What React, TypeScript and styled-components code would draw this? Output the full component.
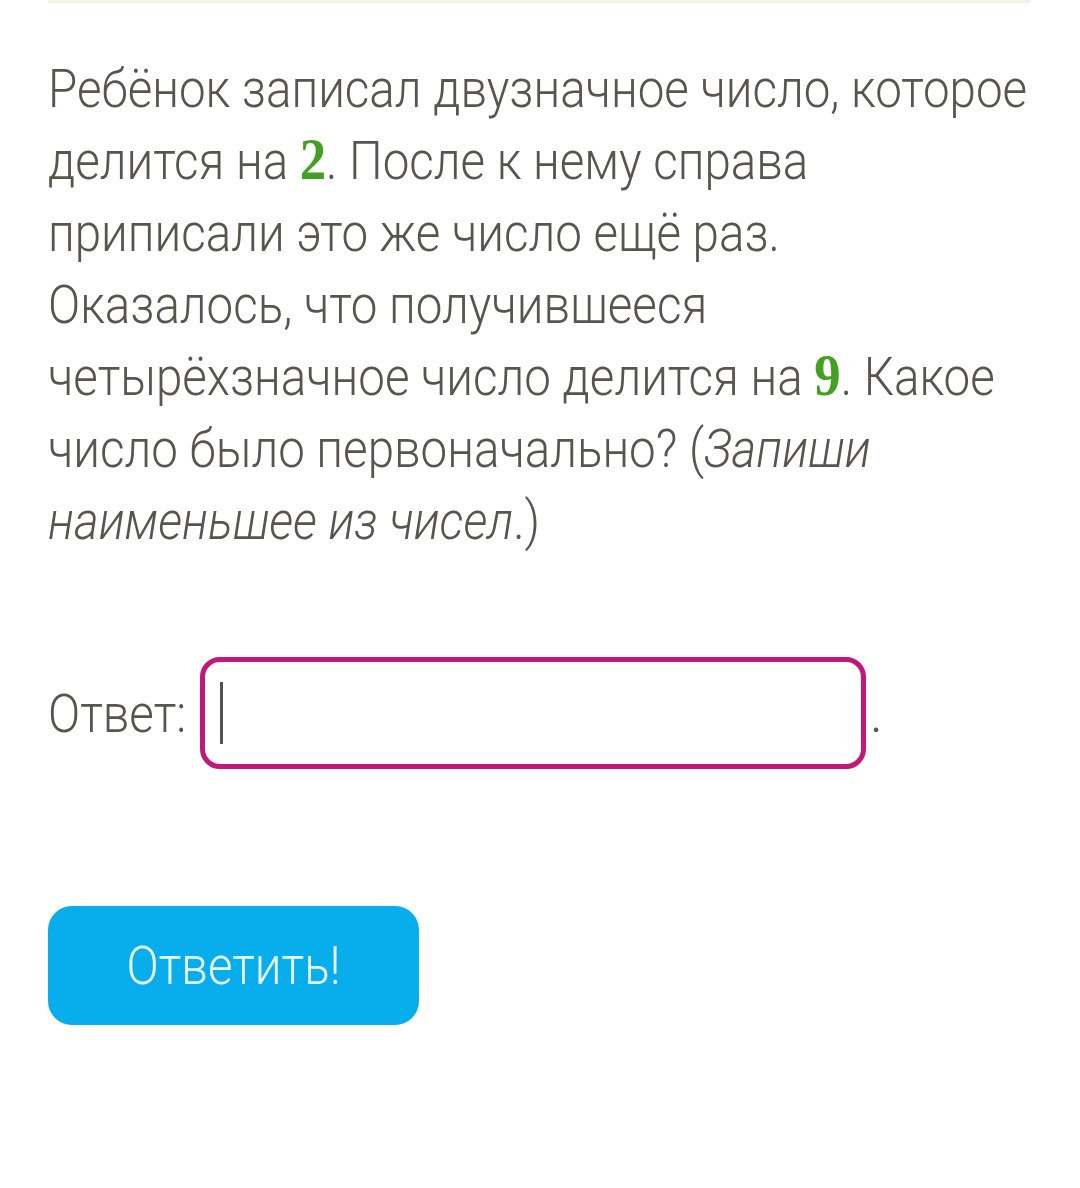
import React from "react";
import styled, { createGlobalStyle } from "styled-components";

const Global = createGlobalStyle`
  html, body { margin: 0; padding: 0; background: #ffffff; overflow: hidden; }
  body { font-family: Roboto, "Noto Sans", sans-serif; }
`;

const Page = styled.div`
  width: 1080px;
  height: 1188px;
  display: flex;
  flex-direction: column;
  padding: 0 50px 0 48px;
  box-sizing: border-box;
`;

const TopRule = styled.div`
  height: 3px;
  background: #eef5e2;
  width: 982px;
`;

const Paragraph = styled.div<{ $sx: number }>`
  margin-top: 50px;
  font-family: Roboto, sans-serif;
  font-weight: 300;
  font-size: 54px;
  line-height: 72px;
  color: #56564e;
  white-space: nowrap;
  transform: scaleX(${(p) => p.$sx});
  transform-origin: left top;
`;

const Num = styled.span`
  font-family: "Liberation Serif", "DejaVu Serif", serif;
  font-weight: 700;
  font-size: 60px;
  line-height: 0;
  color: #44a020;
`;

const Em = styled.i`
  font-style: italic;
`;

const AnswerRow = styled.div`
  margin-top: 100px;
  display: flex;
  align-items: center;
  gap: 12px;
`;

const Label = styled.span`
  font-family: Roboto, sans-serif;
  font-weight: 300;
  font-size: 54px;
  color: #56564e;
  display: inline-block;
  transform: scaleX(0.88);
  transform-origin: left center;
  width: 140px;
  white-space: nowrap;
`;

const InputBox = styled.div`
  width: 666px;
  height: 112px;
  box-sizing: border-box;
  border: 5px solid #c3177c;
  border-radius: 20px;
  display: flex;
  align-items: center;
  padding-left: 15px;
`;

const Caret = styled.div`
  width: 3px;
  height: 62px;
  background: #55554e;
`;

const Dot = styled.span`
  font-family: Roboto, sans-serif;
  font-weight: 300;
  font-size: 54px;
  color: #56564e;
  margin-left: -8px;
`;

const Button = styled.button`
  margin-top: 137px;
  width: 371px;
  height: 119px;
  border: none;
  border-radius: 24px;
  background: #08adec;
  color: #eaf9ff;
  font-family: Roboto, sans-serif;
  font-weight: 300;
  font-size: 54px;
  display: flex;
  align-items: center;
  justify-content: center;
  padding: 0;
`;

const ButtonText = styled.span`
  display: inline-block;
  transform: scaleX(0.88);
  white-space: nowrap;
`;

export default function App() {
  return (
    <>
      <Global />
      <Page>
        <TopRule />
        <Paragraph $sx={0.88}>
          Ребёнок записал двузначное число, которое
          <br />
          делится на <Num>2</Num>. После к нему справа
          <br />
          приписали это же число ещё раз.
          <br />
          Оказалось, что получившееся
          <br />
          четырёхзначное число делится на <Num>9</Num>. Какое
          <br />
          число было первоначально? (<Em>Запиши</Em>
          <br />
          <Em>наименьшее из чисел</Em>.)
        </Paragraph>
        <AnswerRow>
          <Label>Ответ:</Label>
          <InputBox>
            <Caret />
          </InputBox>
          <Dot>.</Dot>
        </AnswerRow>
        <Button>
          <ButtonText>Ответить!</ButtonText>
        </Button>
      </Page>
    </>
  );
}
